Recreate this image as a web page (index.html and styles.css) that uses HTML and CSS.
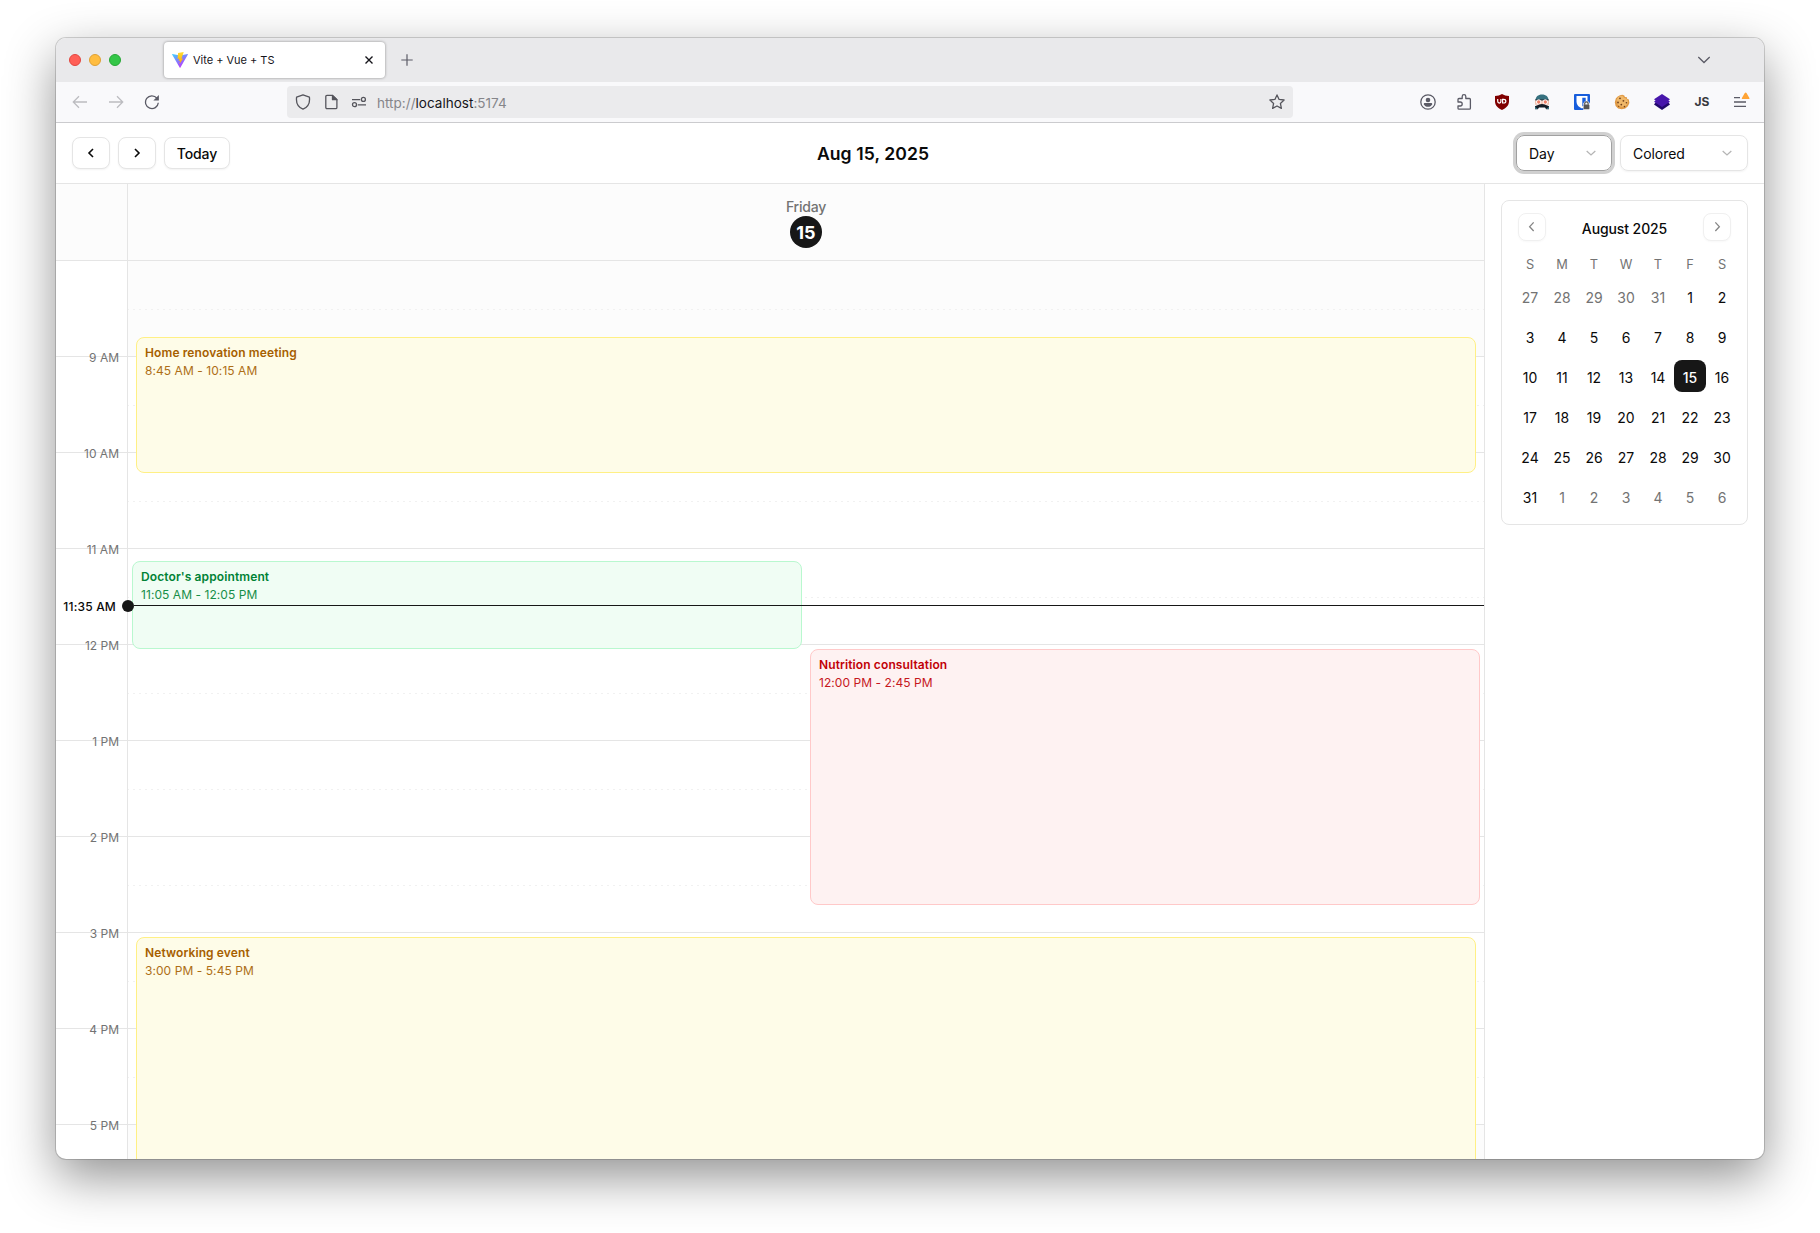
FILE: index.html
```html
<!DOCTYPE html>
<html lang="en">
<head>
<meta charset="utf-8">
<title>Vite + Vue + TS</title>
<link rel="stylesheet" href="styles.css">
</head>
<body>
<div class="window">
  <div class="tabstrip">
    <div class="lights"><i class="light red"></i><i class="light amber"></i><i class="light green"></i></div>
    <div class="tab">
      <svg width="16" height="16" viewBox="0 0 16 16"><defs><linearGradient id="va" x1="0" y1="0" x2=".6" y2="1"><stop offset="0" stop-color="#41d1ff"/><stop offset="1" stop-color="#bd34fe"/></linearGradient><linearGradient id="vb" x1="0" y1="0" x2="0" y2="1"><stop offset="0" stop-color="#ffdd35"/><stop offset="1" stop-color="#ffa800"/></linearGradient></defs><path d="M.3 2.1 8 3.4l7.7-1.3c.2 0 .3.2.2.4L8.3 15.8c-.1.2-.4.2-.5 0L.1 2.500c-.1-.2 0-.4.2-.4Z" fill="url(#va)"/><path d="M11.600 0 6 1.100l-.4 5.800 1.700-.3-.6 2.400 1.500-.4-.8 3.400 3.700-5.600-1.700.3 2.200-6.300Z" fill="url(#vb)"/></svg>
      <span class="tab-title">Vite + Vue + TS</span>
      <svg class="tab-close" width="10" height="10" viewBox="0 0 10 10"><path d="m1.500 1.500 7 7m0-7-7 7" stroke="#15141a" stroke-width="1.400" fill="none"/></svg>
    </div>
    <svg class="new-tab" width="12" height="12" viewBox="0 0 12 12"><path d="M6 .3v11.400M.3 6h11.400" stroke="#5b5b66" stroke-width="1.200"/></svg>
    <svg class="all-tabs" width="14" height="8" viewBox="0 0 14 8"><path d="m1.300 1 5.700 5.500L12.700 1" fill="none" stroke="#5b5b66" stroke-width="1.300"/></svg>
  </div>
  <div class="toolbar">
    <div class="nav">
      <svg width="16" height="16" viewBox="0 0 16 16" fill="none" stroke="#bcbcc0" stroke-width="1.300"><path d="M15 8H1.500M7 2.300 1.300 8 7 13.700"/></svg>
      <svg width="16" height="16" viewBox="0 0 16 16" fill="none" stroke="#bcbcc0" stroke-width="1.300"><path d="M1 8h13.500M9 2.300 14.700 8 9 13.700"/></svg>
      <svg width="16" height="16" viewBox="0 0 16 16"><path d="M12.900 4.200A6.400 6.400 0 1 0 14.300 8.800" fill="none" stroke="#5b5b66" stroke-width="1.300"/><path d="M14.900 1v5.500H9.400Z" fill="#5b5b66"/></svg>
    </div>
    <div class="urlbar">
      <svg width="16" height="16" viewBox="0 0 16 16" fill="none" stroke="#55555c" stroke-width="1.300" stroke-linejoin="round"><path d="M8 .8 14.400 3.200c.7 5.300-1.500 9.900-6.400 12-4.900-2.100-7.100-6.700-6.400-12Z"/></svg>
      <svg width="16" height="16" viewBox="0 0 16 16" stroke="#55555c" stroke-width="1.300" stroke-linejoin="round"><path fill="none" d="M4 1.400h5.500l4.400 4.300v7.700c0 .7-.5 1.200-1.200 1.200H4c-.7 0-1.200-.5-1.200-1.200V2.600c0-.7.500-1.200 1.200-1.200Z"/><path d="M9.500 1.400v4.300h4.400Z" fill="#55555c"/></svg>
      <svg width="16" height="16" viewBox="0 0 16 16" fill="none" stroke="#55555c" stroke-width="1.300"><path d="M1 5.700h8.200M6.800 10.800H15"/><circle cx="12.400" cy="5.400" r="2"/><circle cx="3.500" cy="10.700" r="2"/></svg>
      <span class="url">http://<b>localhost</b>:5174</span>
      <svg class="star" width="16" height="16" viewBox="0 0 16 16" fill="none" stroke="#55555c" stroke-width="1.300" stroke-linejoin="round"><path d="m8 .9 2.100 4.500 5 .6-3.700 3.400 1 5L8 12l-4.400 2.400 1-5L.9 6l5-.6Z"/></svg>
    </div>
    <div class="extensions">
      <span class="slot narrow"><svg width="16" height="16" viewBox="0 0 16 16"><circle cx="8" cy="8" r="7.200" fill="none" stroke="#5b5b66" stroke-width="1.300"/><circle cx="8" cy="6" r="2.300" fill="#5b5b66"/><path d="M3.700 10.200c0-.9.600-1.300 1.300-1.300h6c.7 0 1.300.4 1.300 1.300-.8 1.600-2.400 2.600-4.300 2.600s-3.500-1-4.300-2.600Z" fill="#5b5b66"/></svg></span>
      <span class="slot narrow"><svg width="16" height="16" viewBox="0 0 16 16" fill="none" stroke="#5b5b66" stroke-width="1.300" stroke-linejoin="round"><path d="M2 8V5.500c0-.6.400-1 1-1h3.200V2.500a1.800 1.800 0 0 1 3.600 0v2h3.600c.6 0 1 .4 1 1v8.700c0 .6-.4 1-1 1H3c-.6 0-1-.4-1-1V12h2.200a2 2 0 0 0 0-4Z"/></svg></span>
      <span class="slot"><svg width="16" height="16" viewBox="0 0 16 16"><path d="M8 0c2 1.300 4.300 1.900 7 1.900v5.300c0 4.300-3 6.800-7 8.800-4-2-7-4.500-7-8.800V1.900C3.700 1.900 6 1.300 8 0Z" fill="#800000"/><path d="M3.700 5v2.300c0 2.300 3.200 2.300 3.200 0V5M8.600 5.300v3.700h1c3 0 3-3.700 0-3.700Z" fill="none" stroke="#fff" stroke-width="1.200"/></svg></span>
      <span class="slot"><svg width="16" height="16" viewBox="0 0 16 16"><path d="M1.500 6.500C1.500 2.800 4 .5 8 .5s6.500 2.300 6.500 6Z" fill="#36717f"/><path d="M1 6.200h14v4.500H1Z" fill="#f0c3b0"/><path d="M1.200 5.900h13.600" stroke="#24343d"/><circle cx="4.700" cy="8" r="2.200" fill="#ee8068" stroke="#fff"/><circle cx="11.300" cy="8" r="2.200" fill="#ee8068" stroke="#fff"/><path d="M1 15.200v-3c1.500-.3 2.500-1.600 7-2.200 4.500.6 5.500 1.900 7 2.200v3h-2.800L11 13.600H5l-1.200 1.600Z" fill="#141c24"/><path d="M1 12.800 4 15H1Zm14 0L12 15h3Z" fill="#36717f"/></svg></span>
      <span class="slot"><svg width="16" height="16" viewBox="0 0 16 16"><rect width="16" height="16" rx="1" fill="#175ddc"/><path d="M2.500 2h11v6c0 3-2.500 5.200-5.500 6.500C5 13.200 2.500 11 2.500 8Z" fill="#fff"/><path d="M8.300 3.700h3.400V8c0 2-1.400 3.400-3.400 4.500Z" fill="#175ddc"/><path d="M9.300 16v-6.500l1.200-2h4l1.500 2V16Z" fill="#f9f9fb"/><path d="M10.700 10.800V9.500a1.700 1.700 0 0 1 3.400 0v1.300" fill="none" stroke="#555" stroke-width="1.200"/><rect x="9.600" y="10.500" width="5.800" height="4.800" rx=".6" fill="#555"/></svg></span>
      <span class="slot"><svg width="16" height="16" viewBox="0 0 16 16"><path d="m6 1.300 2.300-.5 2 .8.600 1.400 2 .2.300 1.800 1.700.6.500 3.400-1.500 3.200-2.600 2.200-3.500.9-3.700-.9L1.600 12 .8 8.300l1-3.700L3.700 2.500Z" fill="#e09a45"/><path d="m6 2 2.500-.3 1.500 2.100 2.500 1 1.600 2.400-1 3.300-3 2.500-4-.4-3-2.500-.6-4L4 3Z" fill="#f0b869"/><g fill="#70401c"><circle cx="6" cy="4.300" r=".9"/><circle cx="9.400" cy="6.800" r=".9"/><circle cx="4" cy="8.500" r=".9"/><circle cx="12.400" cy="8.800" r=".8"/><circle cx="7.300" cy="10.600" r=".9"/><circle cx="10.400" cy="12.600" r=".8"/><circle cx="4.700" cy="12.300" r=".6"/></g></svg></span>
      <span class="slot"><svg width="16" height="16" viewBox="0 0 16 16"><path d="M0 10.500 2 8h12l2 2.500L8 16Z" fill="#220a6b"/><path d="m8 0 8 5.300-1.600 1.200L16 7.800 8 13 0 7.800l1.600-1.300L0 5.300Z" fill="#4716ab"/></svg></span>
      <span class="slot js">JS</span>
      <span class="slot narrow"><svg class="menu" width="16" height="20" viewBox="0 0 16 20"><path d="M2 5.700h6M2 10h12M2 14.300h12" stroke="#5b5b66" stroke-width="1.300"/><path d="M12.800.9c.4-.7 1.300-.7 1.700 0l2.900 5c.3.600 0 1.200-.7 1.200h-6.100c-.7 0-1-.6-.7-1.200Z" fill="#ffa436"/></svg></span>
    </div>
  </div>

  <header class="app-header">
    <div class="group">
      <button class="btn icon"><svg width="16" height="16" viewBox="0 0 24 24"><path d="m15 18-6-6 6-6"/></svg></button>
      <button class="btn icon"><svg width="16" height="16" viewBox="0 0 24 24"><path d="m9 18 6-6-6-6"/></svg></button>
      <button class="btn">Today</button>
    </div>
    <h1>Aug 15, 2025</h1>
    <div class="group">
      <div class="select day focused">Day<svg width="16" height="16" viewBox="0 0 24 24"><path d="m5.500 9 6.500 6 6.500-6"/></svg></div>
      <div class="select color">Colored<svg width="16" height="16" viewBox="0 0 24 24"><path d="m5.500 9 6.500 6 6.500-6"/></svg></div>
    </div>
  </header>

  <div class="main">
    <div class="schedule">
      <div class="day-head"><div class="corner"></div><div class="day-name"><span>Friday</span><strong>15</strong></div></div>
      <div class="timeline">
        <div class="gutter">
          <div class="hour"><span>9 AM</span></div><div class="hour"><span>10 AM</span></div><div class="hour"><span>11 AM</span></div><div class="hour"><span>12 PM</span></div><div class="hour"><span>1 PM</span></div><div class="hour"><span>2 PM</span></div><div class="hour"><span>3 PM</span></div><div class="hour"><span>4 PM</span></div><div class="hour"><span>5 PM</span></div>
        </div>
        <div class="column">
          <div class="cell off"></div><div class="cell"></div><div class="cell"></div><div class="cell"></div><div class="cell"></div><div class="cell"></div><div class="cell"></div><div class="cell"></div><div class="cell"></div><div class="cell off"></div>
          <article class="event yellow" style="top:76px;height:136px;left:8px;right:8px"><h2>Home renovation meeting</h2><p>8:45 AM - 10:15 AM</p></article>
          <article class="event mint" style="top:300px;height:88px;left:4px;width:670px"><h2>Doctor's appointment</h2><p>11:05 AM - 12:05 PM</p></article>
          <article class="event rose" style="top:388px;height:256px;right:4px;width:670px"><h2>Nutrition consultation</h2><p>12:00 PM - 2:45 PM</p></article>
          <article class="event yellow" style="top:676px;height:256px;left:8px;right:8px"><h2>Networking event</h2><p>3:00 PM - 5:45 PM</p></article>
        </div>
        <div class="now" style="top:339px"><span>11:35 AM</span><i></i><b></b></div>
      </div>
    </div>
    <aside class="sidebar">
      <div class="calendar">
        <div class="cal-head">
          <button class="cal-nav"><svg width="16" height="16" viewBox="0 0 24 24"><path d="m14.500 18-6-6.500 6-6.500"/></svg></button>
          <span>August 2025</span>
          <button class="cal-nav"><svg width="16" height="16" viewBox="0 0 24 24"><path d="m9.500 18 6-6.500-6-6.500"/></svg></button>
        </div>
        <div class="weekdays"><span>S</span><span>M</span><span>T</span><span>W</span><span>T</span><span>F</span><span>S</span></div>
        <div class="days">
          <span class="out">27</span><span class="out">28</span><span class="out">29</span><span class="out">30</span><span class="out">31</span><span>1</span><span>2</span>
          <span>3</span><span>4</span><span>5</span><span>6</span><span>7</span><span>8</span><span>9</span>
          <span>10</span><span>11</span><span>12</span><span>13</span><span>14</span><span class="selected">15</span><span>16</span>
          <span>17</span><span>18</span><span>19</span><span>20</span><span>21</span><span>22</span><span>23</span>
          <span>24</span><span>25</span><span>26</span><span>27</span><span>28</span><span>29</span><span>30</span>
          <span>31</span><span class="out">1</span><span class="out">2</span><span class="out">3</span><span class="out">4</span><span class="out">5</span><span class="out">6</span>
        </div>
      </div>
    </aside>
  </div>
</div>
</body>
</html>
```
FILE: styles.css
```css
* { box-sizing: border-box; }
body {
  margin: 0;
  width: 1820px;
  height: 1233px;
  padding: 38px 56px 74px;
  background: #fff;
  color: #0a0a0a;
  font: 14px/20px Inter, sans-serif;
  overflow: hidden;
}
svg { display: block; flex: none; }
.window {
  height: 1121px;
  display: flex;
  flex-direction: column;
  background: #fff;
  border-radius: 10px;
  overflow: hidden;
  box-shadow: 0 0 0 1px rgba(0, 0, 0, .16), 0 18px 50px rgba(0, 0, 0, .43);
}

/* Browser chrome */
.tabstrip { display: flex; align-items: center; flex: none; height: 44px; background: #e9e9eb; padding: 0 53px 0 13px; }
.lights { display: flex; gap: 8px; width: 95px; }
.light { width: 12px; height: 12px; border-radius: 50%; border: 1px solid; }
.red { background: #ff5f57; border-color: #e2463f; }
.amber { background: #ffbd40; border-color: #dfa033; }
.green { background: #34c648; border-color: #27a835; }
.tab {
  display: flex;
  align-items: center;
  width: 221px;
  height: 36px;
  padding: 0 11px 0 8px;
  border-radius: 4px;
  background: #fff;
  box-shadow: 0 0 3px rgba(0, 0, 0, .4);
}
.tab-title { margin-left: 5px; font-size: 11px; color: #15141a; letter-spacing: -.02px; white-space: nowrap; }
.tab-close { margin-left: auto; }
.new-tab { margin: 0 0 0 16px; }
.all-tabs { margin-left: auto; }
.toolbar {
  display: flex;
  align-items: center;
  flex: none;
  height: 41px;
  background: #f9f9fb;
  border-bottom: 1px solid #cbcbce;
  padding: 0 6px 0 16px;
}
.nav { display: flex; gap: 20px; width: 215px; }
.urlbar {
  display: flex;
  align-items: center;
  gap: 12px;
  width: 1006px;
  height: 32px;
  padding: 0 8px;
  border-radius: 4px;
  background: #ebebed;
}
.url { color: #85858a; font-size: 13.5px; letter-spacing: .02px; margin: 2px 0 0 -2px; }
.url b { color: #15141a; font-weight: 400; }
.star { margin-left: auto; }
.extensions { display: flex; align-items: center; margin-left: auto; }
.slot { display: flex; justify-content: center; width: 40px; }
.slot.narrow { width: 36px; }
.js { color: #38383d; font-size: 12px; font-weight: 700; }
.menu { overflow: visible; }

/* Application header */
.app-header {
  display: flex;
  align-items: center;
  justify-content: space-between;
  flex: none;
  height: 61px;
  padding: 0 16px;
  border-bottom: 1px solid #e5e5e5;
}
.group { display: flex; align-items: center; gap: 8px; }
.btn {
  display: flex;
  align-items: center;
  justify-content: center;
  width: 66px;
  height: 32px;
  padding: 1px 0 0;
  border: 1px solid #e5e5e5;
  border-radius: 8px;
  background: #fff;
  box-shadow: 0 1px 2px rgba(0, 0, 0, .05);
  font: 500 14px/20px Inter, sans-serif;
  color: #0a0a0a;
  letter-spacing: -.1px;
}
.btn.icon { width: 38px; padding: 0; }
.btn svg { fill: none; stroke: #0a0a0a; stroke-width: 2.400; }
h1 { margin: 0; padding-top: 1px; font-size: 17.6px; line-height: 24px; font-weight: 600; letter-spacing: .07px; }
.select {
  display: flex;
  align-items: center;
  justify-content: space-between;
  height: 36px;
  padding: 1px 12px 0;
  border: 1px solid #e5e5e5;
  border-radius: 8px;
  box-shadow: 0 1px 2px rgba(0, 0, 0, .05);
  letter-spacing: -.05px;
}
.select svg { fill: none; stroke: #b5b5b5; stroke-width: 1.900; margin-top: -2px; }
.day { width: 96px; }
.color { width: 128px; }
.focused { border-color: #a1a1a1; box-shadow: 0 0 0 3px #d0d0d0; }

/* Schedule */
.main { display: flex; flex: 1; min-height: 0; }
.schedule { flex: 1; display: flex; flex-direction: column; }
.day-head { display: flex; flex: none; height: 77px; background: #fcfcfc; border-bottom: 1px solid #e5e5e5; }
.corner { width: 72px; border-right: 1px solid #e5e5e5; }
.day-name { flex: 1; display: flex; flex-direction: column; align-items: center; padding-top: 12px; color: #737373; }
.day-name span { height: 20px; padding-top: 1px; font-weight: 500; letter-spacing: -.2px; }
.day-name strong {
  width: 32px;
  height: 32px;
  border-radius: 50%;
  background: #171717;
  color: #fff;
  font-size: 18px;
  font-weight: 700;
  line-height: 34px;
  text-align: center;
}
.timeline { position: relative; display: flex; flex: 1; min-height: 0; overflow: hidden; }
.gutter { width: 72px; border-right: 1px solid #e5e5e5; height: 960px; }
.hour {
  display: flex;
  align-items: flex-end;
  justify-content: flex-end;
  height: 96px;
  padding-right: 8px;
  border-bottom: 1px solid #e5e5e5;
  color: #737373;
  font-size: 12px;
  line-height: 16px;
}
.hour span { margin-bottom: -10px; }
.column { position: relative; flex: 1; height: 960px; }
.cell { height: 96px; padding-top: 48px; border-bottom: 1px solid #e5e5e5; }
.cell::before {
  content: "";
  display: block;
  height: 1px;
  background: repeating-linear-gradient(90deg, #f1f1f1 0 1px, transparent 1px 5px, #f1f1f1 5px 6px);
}
.off { background: #fcfcfc; }
.event { position: absolute; padding: 6px 8px; border: 1px solid; border-radius: 8px; font-size: 12px; line-height: 18px; }
.event h2 { margin: 0; font: inherit; font-weight: 600; letter-spacing: .11px; }
.event p { margin: 0; opacity: .9; letter-spacing: .06px; }
.yellow { background: #fefce8; border-color: #fff085; color: #a65f00; }
.mint { background: #f0fdf4; border-color: #b9f8cf; color: #008236; }
.rose { background: #fef2f2; border-color: #ffc9c9; color: #c10007; }
.now { position: absolute; left: 0; right: 0; display: flex; align-items: center; height: 12px; }
.now span { width: 60px; margin: 1px 6px 0 0; text-align: right; font-size: 12px; font-weight: 500; line-height: 16px; letter-spacing: .18px; }
.now i { width: 12px; height: 12px; border-radius: 50%; background: #171717; }
.now b { flex: 1; height: 1px; margin-top: -1px; background: #171717; }

/* Month picker */
.sidebar { width: 280px; padding: 16px; border-left: 1px solid #e5e5e5; }
.calendar { height: 325px; padding: 12px; border: 1px solid #e5e5e5; border-radius: 8px; }
.cal-head { display: flex; align-items: center; justify-content: space-between; height: 28px; padding: 0 4px; font-weight: 500; letter-spacing: -.1px; }
.cal-head span { padding-top: 3px; }
.cal-nav {
  display: flex;
  align-items: center;
  justify-content: center;
  width: 28px;
  height: 28px;
  padding: 0;
  border: 1px solid #f0f0f0;
  border-radius: 8px;
  background: #fff;
  box-shadow: 0 1px 2px rgba(0, 0, 0, .03);
}
.cal-nav svg { fill: none; stroke: #858585; stroke-width: 2; }
.weekdays, .days { display: grid; grid-template-columns: repeat(7, 32px); text-align: center; }
.weekdays { margin-top: 13px; color: #737373; font-size: 12.8px; line-height: 21px; }
.days { margin-top: 5px; row-gap: 8px; }
.days span { height: 32px; line-height: 35px; border-radius: 8px; }
.days .out { color: #737373; }
.days .selected { background: #171717; color: #fff; font-weight: 500; }
```
